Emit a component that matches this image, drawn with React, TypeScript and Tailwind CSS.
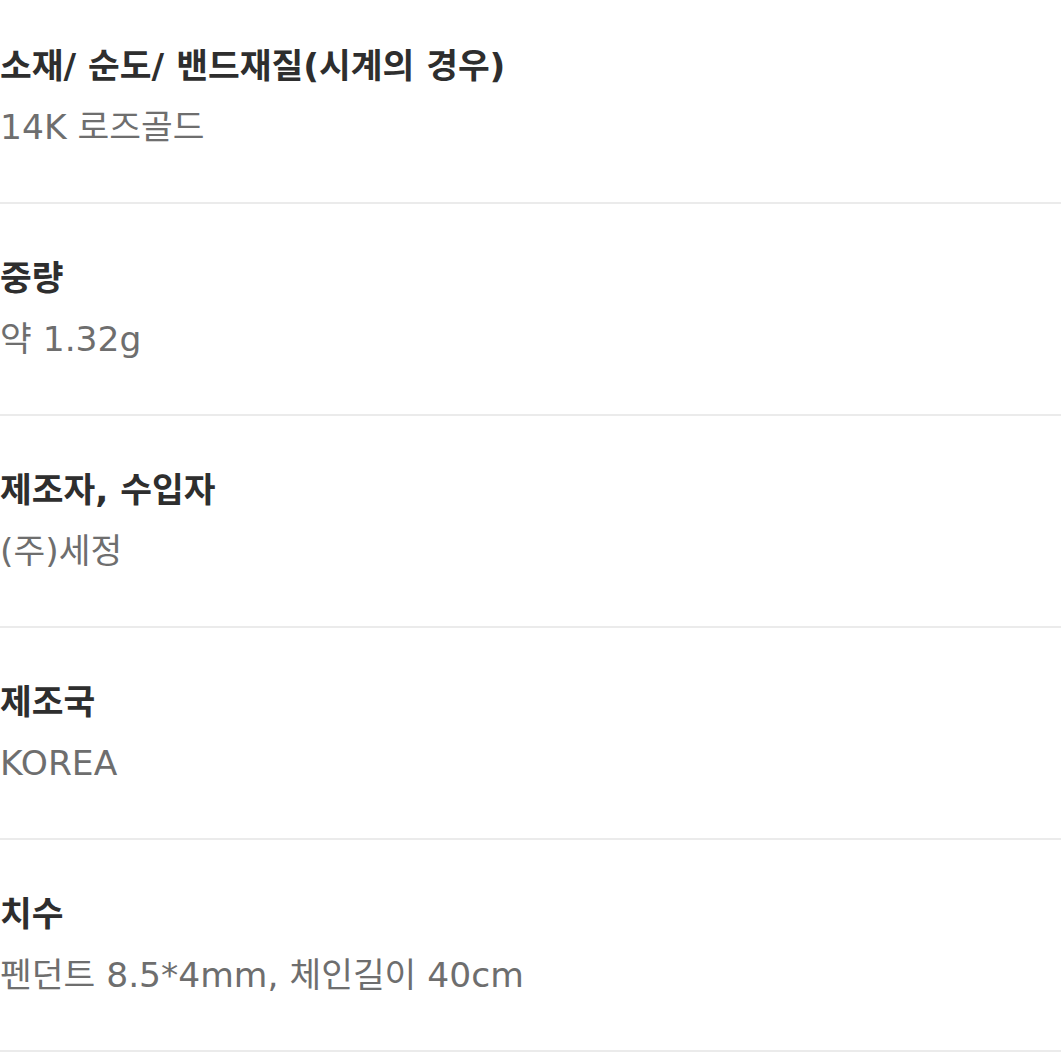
const rows = [
  { label: "소재/ 순도/ 밴드재질(시계의 경우)", value: "14K 로즈골드" },
  { label: "중량", value: "약 1.32g" },
  { label: "제조자, 수입자", value: "(주)세정" },
  { label: "제조국", value: "KOREA" },
  { label: "치수", value: "펜던트 8.5*4mm, 체인길이 40cm" },
];

export default function App() {
  return (
    <div className="w-[1061px] h-[1061px] overflow-hidden bg-white font-['DejaVu_Sans','Noto_Sans_CJK_KR',sans-serif]">
      {rows.map((r, i) => (
        <div
          key={r.label}
          className={`${i === 0 ? "pt-[42px]" : "pt-[50px]"} pb-[51px] border-b-2 border-[#ebebeb]`}
        >
          <div className="text-[34.5px] leading-[48px] font-bold text-[#2e2e2e]">{r.label}</div>
          <div className="mt-[13px] text-[34.5px] leading-[48px] text-[#6e6e6e]">{r.value}</div>
        </div>
      ))}
    </div>
  );
}
